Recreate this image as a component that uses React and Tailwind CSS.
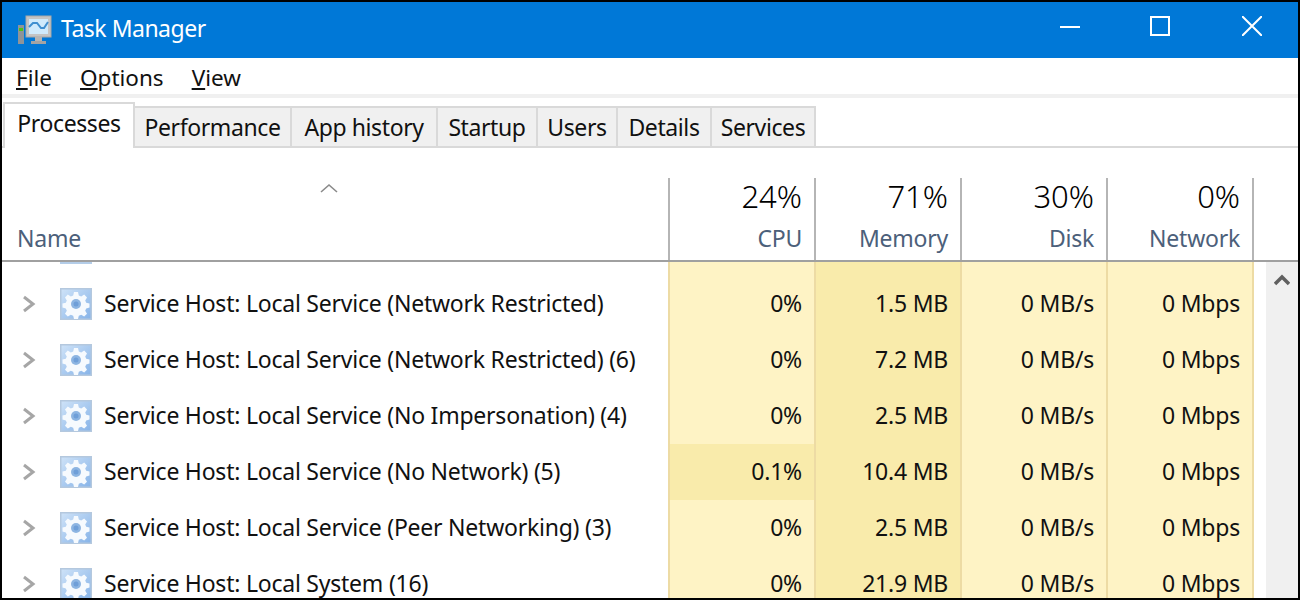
import React from 'react';

const tabs = [
  { label: 'Performance', width: 'w-[157px]' },
  { label: 'App history', width: 'w-[146px]' },
  { label: 'Startup', width: 'w-[100px]' },
  { label: 'Users', width: 'w-[80px]' },
  { label: 'Details', width: 'w-[94px]' },
  { label: 'Services', width: 'w-[104px]' },
];

const headers = [
  { pct: '24%', label: 'CPU' },
  { pct: '71%', label: 'Memory' },
  { pct: '30%', label: 'Disk' },
  { pct: '0%', label: 'Network' },
];

const rows = [
  { name: 'Service Host: Local Service (Network Restricted)', cpu: '0%', mem: '1.5 MB' },
  { name: 'Service Host: Local Service (Network Restricted) (6)', cpu: '0%', mem: '7.2 MB' },
  { name: 'Service Host: Local Service (No Impersonation) (4)', cpu: '0%', mem: '2.5 MB' },
  { name: 'Service Host: Local Service (No Network) (5)', cpu: '0.1%', mem: '10.4 MB', hot: true },
  { name: 'Service Host: Local Service (Peer Networking) (3)', cpu: '0%', mem: '2.5 MB' },
  { name: 'Service Host: Local System (16)', cpu: '0%', mem: '21.9 MB' },
];

function MonitorIcon() {
  return (
    <svg width="34" height="30" viewBox="0 0 34 30" className="shrink-0">
      <rect x="0" y="10" width="6" height="19" fill="#8f9499" />
      <rect x="1" y="13" width="4" height="3" fill="#4cc417" />
      <rect x="8" y="1" width="25" height="21" fill="#c4c4c4" stroke="#a8a8a8" />
      <rect x="11" y="4" width="19" height="15" fill="#cfeafc" />
      <polyline points="11,12 15,8 19,8 23,13 26,13 30,7" fill="none" stroke="#3f8fd0" strokeWidth="2" />
      <rect x="17" y="22" width="7" height="4" fill="#b5b5b5" />
      <rect x="13" y="26" width="15" height="3" fill="#a3a3a3" />
    </svg>
  );
}

function GearIcon() {
  return (
    <svg width="32" height="32" viewBox="0 0 32 32" className="shrink-0">
      <defs>
        <linearGradient id="gearBg" x1="0" y1="0" x2="1" y2="1">
          <stop offset="0" stopColor="#cfe3f8" />
          <stop offset="1" stopColor="#86b3e8" />
        </linearGradient>
      </defs>
      <rect x="0.75" y="0.75" width="30.5" height="30.5" fill="url(#gearBg)" stroke="#b4c8de" strokeWidth="1.5" />
      <path
        d="M14 4h4l.8 3.4 2.4 1 3-1.8 2.8 2.8-1.8 3 1 2.4 3.3.8v4l-3.3.8-1 2.4 1.8 3-2.8 2.8-3-1.8-2.4 1-.8 3.2h-4l-.8-3.2-2.4-1-3 1.8-2.8-2.8 1.8-3-1-2.4-3.3-.8v-4l3.3-.8 1-2.4-1.8-3 2.8-2.8 3 1.8 2.4-1z"
        fill="#f6fafe"
      />
      <circle cx="16" cy="16" r="5" fill="#8db5e2" />
      <circle cx="16" cy="16" r="2.5" fill="#6f9fd8" />
    </svg>
  );
}

function Cells({ cpu, mem, hot, empty }) {
  const cell = 'w-[146px] shrink-0 border-l-2 border-[#eddba4] flex items-center justify-end pr-[12px] pb-[2px]';
  return (
    <>
      <div className={`${cell} ${hot ? 'bg-[#f9ebab]' : 'bg-[#fef3c5]'}`}>{empty ? null : cpu}</div>
      <div className={`${cell} bg-[#f9ebab]`}>{empty ? null : mem}</div>
      <div className={`${cell} bg-[#fef3c5]`}>{empty ? null : '0 MB/s'}</div>
      <div className={`${cell} bg-[#fef3c5]`}>{empty ? null : '0 Mbps'}</div>
      <div className="w-[2px] shrink-0 bg-[#eddba4]" />
    </>
  );
}

export default function App() {
  return (
    <div className="w-[1300px] h-[600px] overflow-hidden border-2 border-black bg-white flex flex-col text-[23px] tracking-[-0.23px] text-[#111] font-['Noto_Sans','Open_Sans',sans-serif]">
      <div className="h-[56px] shrink-0 bg-[#0078d7] flex items-center text-white">
        <div className="ml-[16px]"><MonitorIcon /></div>
        <span className="ml-[9px] -mt-[3px] tracking-[-0.5px]">Task Manager</span>
        <div className="ml-auto flex items-center mb-[8px]">
          <div className="w-[20px] h-[2px] bg-white mr-[70px] mt-[2px]" />
          <div className="w-[20px] h-[20px] border-2 border-white mr-[72px]" />
          <svg width="20" height="20" viewBox="0 0 20 20" className="mr-[36px]">
            <path d="M0 0 20 20M20 0 0 20" stroke="#fff" strokeWidth="2" />
          </svg>
        </div>
      </div>

      <div className="h-[36px] shrink-0 flex items-center pl-[14px] pt-[4px] gap-[28px] text-[22.5px] tracking-normal">
        <span><span className="underline underline-offset-2">F</span>ile</span>
        <span><span className="underline underline-offset-2">O</span>ptions</span>
        <span><span className="underline underline-offset-2">V</span>iew</span>
      </div>
      <div className="h-[4px] shrink-0 bg-[#f0f0f0]" />

      <div className="h-[50px] shrink-0 flex items-end border-b-2 border-[#d9d9d9] pl-[1px] tracking-[-0.4px]">
        <div className="w-[132px] h-[46px] -mb-[2px] bg-white border-2 border-b-0 border-[#d9d9d9] flex items-center justify-center pb-[6px]">
          Processes
        </div>
        {tabs.map((t) => (
          <div
            key={t.label}
            className={`${t.width} h-[40px] bg-[#f0f0f0] border-t-2 border-r-2 border-[#d9d9d9] flex items-center justify-center`}
          >
            {t.label}
          </div>
        ))}
      </div>

      <div className="h-[114px] shrink-0 flex flex-col">
        <div className="h-[112px] flex items-end">
          <div className="w-[666px] shrink-0 h-[82px] relative flex flex-col">
            <svg width="18" height="10" viewBox="0 0 18 10" className="self-center ml-[-12px] mt-[5px]">
              <path d="M1 9 9 2l8 7" fill="none" stroke="#8a8a8a" strokeWidth="1.6" />
            </svg>
            <span className="mt-auto mb-[5px] pl-[15px] text-[#4c607a]">Name</span>
          </div>
          {headers.map((h) => (
            <div
              key={h.label}
              className="w-[146px] h-[82px] shrink-0 border-l-2 border-[#b5b5b5] flex flex-col items-end pr-[12px]"
            >
              <span className="text-[31px] leading-[36px] font-light text-black tracking-normal">{h.pct}</span>
              <span className="mt-auto mb-[5px] text-[#4c607a]">{h.label}</span>
            </div>
          ))}
          <div className="w-[2px] h-[82px] bg-[#b5b5b5]" />
        </div>
        <div className="h-[2px] bg-[#a0a0a0]" />
      </div>

      <div className="flex-1 flex min-h-0 overflow-hidden leading-[28px]">
        <div className="flex flex-col w-[1264px] shrink-0">
          <div className="h-[14px] shrink-0 flex">
            <div className="w-[666px] shrink-0 pl-[58px]">
              <div className="w-[32px] h-[2px] bg-[#b4cde8]" />
            </div>
            <Cells empty />
          </div>
          {rows.map((r, i) => (
            <div key={i} className="h-[56px] shrink-0 flex">
              <div className="w-[666px] shrink-0 flex items-center pl-[20px]">
                <svg width="14" height="18" viewBox="0 0 14 18" className="shrink-0">
                  <path d="M2 2l9 7-9 7" fill="none" stroke="#a6a6a6" strokeWidth="3" />
                </svg>
                <div className="ml-[24px]"><GearIcon /></div>
                <span className="ml-[12px] -mt-[2px] whitespace-nowrap">{r.name}</span>
              </div>
              <Cells cpu={r.cpu} mem={r.mem} hot={r.hot} />
            </div>
          ))}
        </div>
        <div className="w-[32px] shrink-0 bg-[#f0f0f0] flex justify-center pt-[12px]">
          <svg width="16" height="12" viewBox="0 0 16 12">
            <path d="M1 10 8 3l7 7" fill="none" stroke="#606060" strokeWidth="3.5" />
          </svg>
        </div>
      </div>
    </div>
  );
}
